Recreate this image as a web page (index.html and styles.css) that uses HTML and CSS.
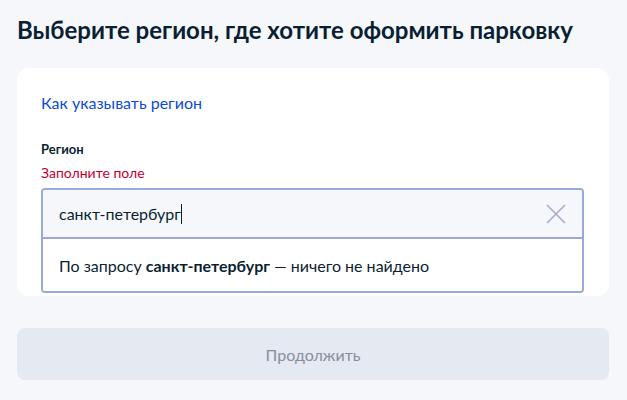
FILE: index.html
```html
<!DOCTYPE html>
<html lang="ru">
<head>
<meta charset="utf-8">
<link rel="stylesheet" href="styles.css">
</head>
<body>
<main class="page">
  <h1 class="title">Выберите регион, где хотите оформить парковку</h1>
  <section class="card">
    <a class="help-link" href="#">Как указывать регион</a>
    <div class="field">
      <div class="label">Регион</div>
      <div class="error">Заполните поле</div>
      <div class="combo">
        <div class="input-row">
          <span class="input-text">санкт-петербург<span class="caret"></span></span>
          <svg class="clear" width="20" height="20" viewBox="0 0 20 20" aria-hidden="true">
            <path d="M1 1 L19 19 M19 1 L1 19" stroke="#a3aed0" stroke-width="1.6" fill="none"/>
          </svg>
        </div>
        <div class="dropdown">По запросу <b>санкт-петербург</b> — ничего не найдено</div>
      </div>
    </div>
  </section>
  <button class="continue" type="button">Продолжить</button>
</main>
</body>
</html>
```

FILE: styles.css
```css
* { box-sizing: border-box; }
html, body { margin: 0; padding: 0; }
body {
  background: #f5f7fb;
  font-family: Lato, "Noto Sans", sans-serif;
  color: #0b1f33;
  width: 627px;
  height: 400px;
  overflow: hidden;
}
.page {
  padding: 15px 18px 0 17px;
  display: flex;
  flex-direction: column;
}
.title {
  margin: 0;
  font-size: 24px;
  line-height: 30px;
  font-weight: 700;
  color: #0b1f33;
}
.card {
  margin-top: 23px;
  background: #fff;
  border-radius: 12px;
  height: 228px;
  padding: 24px 25px 0 24px;
  display: flex;
  flex-direction: column;
}
.help-link {
  font-size: 16px;
  line-height: 22px;
  color: #0d4cd3;
  text-decoration: none;
  align-self: flex-start;
}
.field {
  margin-top: 26px;
  display: flex;
  flex-direction: column;
}
.label {
  font-size: 13px;
  line-height: 18px;
  font-weight: 700;
  color: #0b1f33;
}
.error {
  margin-top: 6px;
  font-size: 14px;
  line-height: 18px;
  color: #c1002e;
}
.combo {
  margin-top: 6px;
  border: 2px solid #9aa9d8;
  border-radius: 4px;
  overflow: hidden;
}
.input-row {
  height: 49px;
  background: #f5f7fa;
  display: flex;
  align-items: center;
  justify-content: space-between;
  padding: 0 16px 0 16px;
  border-bottom: 2px solid #9aa9d8;
}
.input-text {
  font-size: 16px;
  color: #0b1f33;
  display: flex;
  align-items: center;
}
.caret {
  display: inline-block;
  width: 1px;
  height: 20px;
  background: #0b1f33;
}
.clear { display: block; }
.dropdown {
  height: 52px;
  background: #fff;
  padding: 0 16px;
  display: flex;
  align-items: center;
  font-size: 16px;
  color: #0b1f33;
}
.dropdown b { font-weight: 700; margin: 0 4px; }
.continue {
  margin-top: 32px;
  height: 52px;
  border: 0;
  border-radius: 8px;
  background: #e4e9f2;
  color: #86909c;
  font-family: inherit;
  font-size: 16px;
}
```
